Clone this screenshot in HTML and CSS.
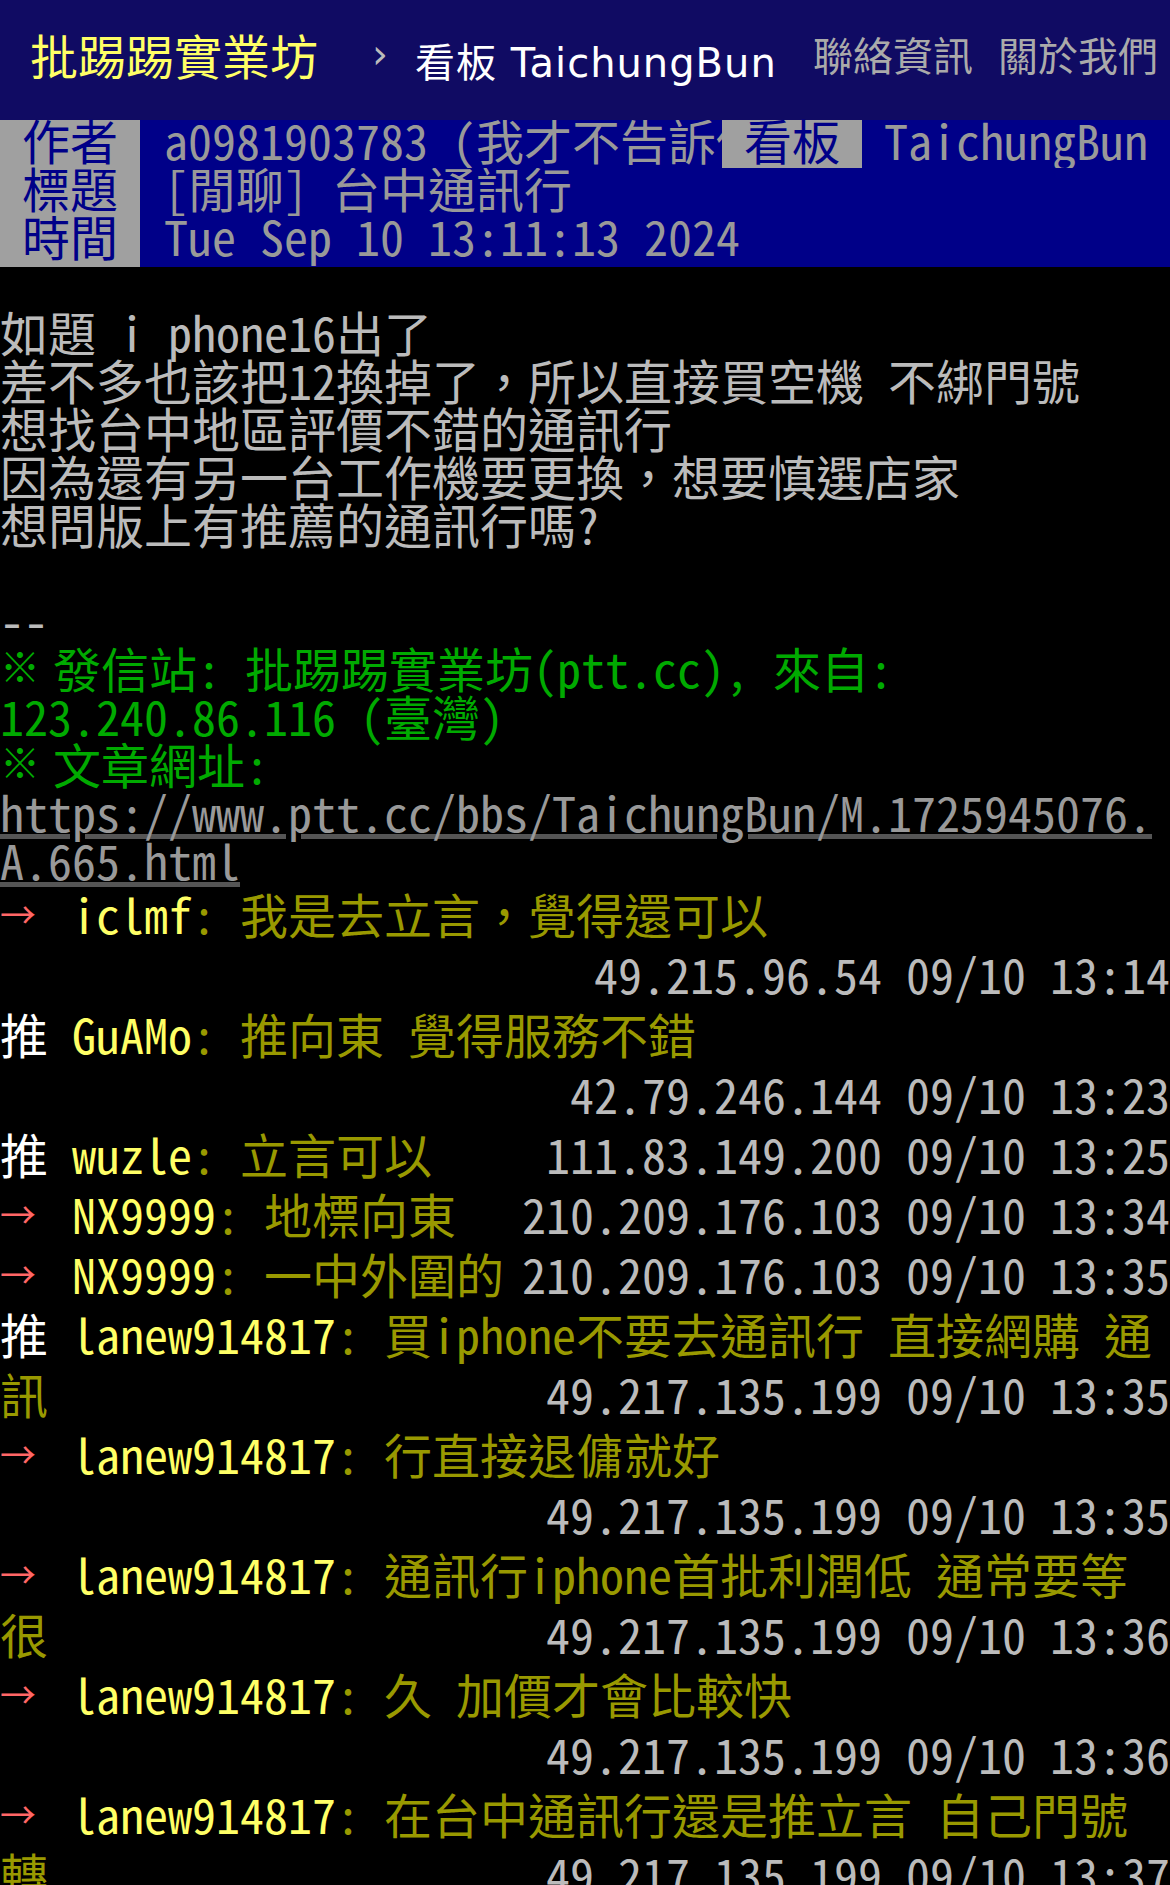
FILE: index.html
```
<!DOCTYPE html>
<html>
<head>
    <meta charset="utf-8">
    <link rel="stylesheet" href="styles.css">
</head>
<body>
    <div id="topbar">
        <a class="logo" href="#">批踢踢實業坊</a>
        <span class="sep">›</span>
        <a class="board" href="#"><span class="board-label">看板 </span>TaichungBun</a>
        <a class="right" href="#">聯絡資訊</a>
        <a class="right" href="#">關於我們</a>
    </div>

    <div id="main-content">
        <div class="article-meta">
            <div class="metaline"><span class="meta-tag">作者</span><span class="meta-value">a0981903783 (我才不告訴你)</span></div>
            <div class="metaline-right"><span class="meta-tag">看板</span><span class="meta-value">TaichungBun</span></div>
            <div class="metaline"><span class="meta-tag">標題</span><span class="meta-value">[閒聊] 台中通訊行</span></div>
            <div class="metaline last"><span class="meta-tag">時間</span><span class="meta-value">Tue Sep 10 13:11:13 2024</span></div>
        </div>
<div class="content">
如題 i phone16出了
差不多也該把12換掉了，所以直接買空機 不綁門號
想找台中地區評價不錯的通訊行
因為還有另一台工作機要更換，想要慎選店家
想問版上有推薦的通訊行嗎?

--
<span class="f2"><span class="mark">※</span> 發信站: 批踢踢實業坊(ptt.cc), 來自: 123.240.86.116 (臺灣)
</span><span class="f2"><span class="mark">※</span> 文章網址: </span><a href="#">https://www.ptt.cc/bbs/TaichungBun/M.1725945076.A.665.html</a></div>

        <div class="push"><span class="push-tag arrow">→</span><span class="push-userid">iclmf</span><span class="push-content">: 我是去立言，覺得還可以</span><span class="push-ipdatetime">49.215.96.54 09/10 13:14</span></div>
        <div class="push"><span class="push-tag">推</span><span class="push-userid">GuAMo</span><span class="push-content">: 推向東 覺得服務不錯</span><span class="push-ipdatetime">42.79.246.144 09/10 13:23</span></div>
        <div class="push"><span class="push-tag">推</span><span class="push-userid">wuzle</span><span class="push-content">: 立言可以</span><span class="push-ipdatetime">111.83.149.200 09/10 13:25</span></div>
        <div class="push"><span class="push-tag arrow">→</span><span class="push-userid">NX9999</span><span class="push-content">: 地標向東</span><span class="push-ipdatetime">210.209.176.103 09/10 13:34</span></div>
        <div class="push"><span class="push-tag arrow">→</span><span class="push-userid">NX9999</span><span class="push-content">: 一中外圍的</span><span class="push-ipdatetime">210.209.176.103 09/10 13:35</span></div>
        <div class="push"><span class="push-tag">推</span><span class="push-userid">lanew914817</span><span class="push-content">: 買iphone不要去通訊行 直接網購 通訊</span><span class="push-ipdatetime">49.217.135.199 09/10 13:35</span></div>
        <div class="push"><span class="push-tag arrow">→</span><span class="push-userid">lanew914817</span><span class="push-content">: 行直接退傭就好</span><span class="push-ipdatetime">49.217.135.199 09/10 13:35</span></div>
        <div class="push"><span class="push-tag arrow">→</span><span class="push-userid">lanew914817</span><span class="push-content">: 通訊行iphone首批利潤低 通常要等很</span><span class="push-ipdatetime">49.217.135.199 09/10 13:36</span></div>
        <div class="push"><span class="push-tag arrow">→</span><span class="push-userid">lanew914817</span><span class="push-content">: 久 加價才會比較快</span><span class="push-ipdatetime">49.217.135.199 09/10 13:36</span></div>
        <div class="push"><span class="push-tag arrow">→</span><span class="push-userid">lanew914817</span><span class="push-content">: 在台中通訊行還是推立言 自己門號轉</span><span class="push-ipdatetime">49.217.135.199 09/10 13:37</span></div>
    </div>
</body>
</html>
```

FILE: styles.css
```
body {
    margin: 0;
    background: #000;
    color: #bbb;
}

a {
    text-decoration: none;
}

#topbar {
    display: flex;
    align-items: center;
    box-sizing: border-box;
    height: 120px;
    padding: 0 12px 12px 30px;
    background: #100b63;
    font-family: "DejaVu Sans", "Noto Sans CJK TC", sans-serif;
}

#topbar .logo {
    font-size: 48px;
    color: #ff6;
    margin-right: 54px;
}

#topbar .sep {
    font-size: 40px;
    color: #bbb;
    margin-right: 27px;
}

#topbar .board {
    font-size: 40px;
    letter-spacing: 1px;
    color: #fff;
    padding-top: 12px;
}

#topbar .right {
    font-size: 40px;
    color: #aaa;
    margin-left: 25px;
}

#topbar .board + .right {
    margin-left: auto;
}

#main-content {
    font-family: "Noto Sans Mono CJK TC", "Noto Sans CJK TC", "DejaVu Sans Mono", monospace;
    font-size: 48px;
    line-height: 48px;
}

.article-meta {
    position: relative;
    background: #008;
}

.metaline,
.metaline-right {
    display: flex;
    height: 48px;
}

.metaline-right {
    position: absolute;
    top: 0;
    right: 0;
}

.meta-tag {
    width: 140px;
    line-height: 38px;
    padding-bottom: 10px;
    text-align: center;
    background: #a0a0a0;
    color: #008;
}

.meta-value {
    flex: 1;
    line-height: 38px;
    padding: 0 24px 10px;
    background: #008;
    color: #999;
    white-space: nowrap;
    overflow: hidden;
}

.metaline-right .meta-tag {
    padding-bottom: 13px;
}

.metaline-right .meta-value {
    padding: 0 22px 10px;
}

.metaline.last {
    height: 51px;
    margin-bottom: -3px;
}

.metaline.last .meta-tag,
.metaline.last .meta-value {
    padding-bottom: 13px;
}

.metaline.last .meta-value {
    flex: none;
}

.content {
    margin-top: -8px;
    white-space: pre-wrap;
    overflow-wrap: break-word;
}

.f2 {
    color: #0a0;
}

.mark {
    font-size: 40px;
    letter-spacing: -11px;
    line-height: 0;
    vertical-align: 6px;
}

.content a {
    color: #999;
    text-decoration: underline;
    text-decoration-color: #555;
    text-decoration-thickness: 5px;
    text-underline-offset: 2px;
}

.push {
    display: flow-root;
    line-height: 60px;
}

.push-tag {
    display: inline-block;
    width: 72px;
    color: #fff;
}

.push-tag.arrow {
    font-size: 36px;
    line-height: 0;
    vertical-align: 5px;
    color: #f66;
}

.push-userid {
    color: #ff6;
}

.push-content {
    color: #990;
}

.push-ipdatetime {
    float: right;
    color: #bbb;
}
```
